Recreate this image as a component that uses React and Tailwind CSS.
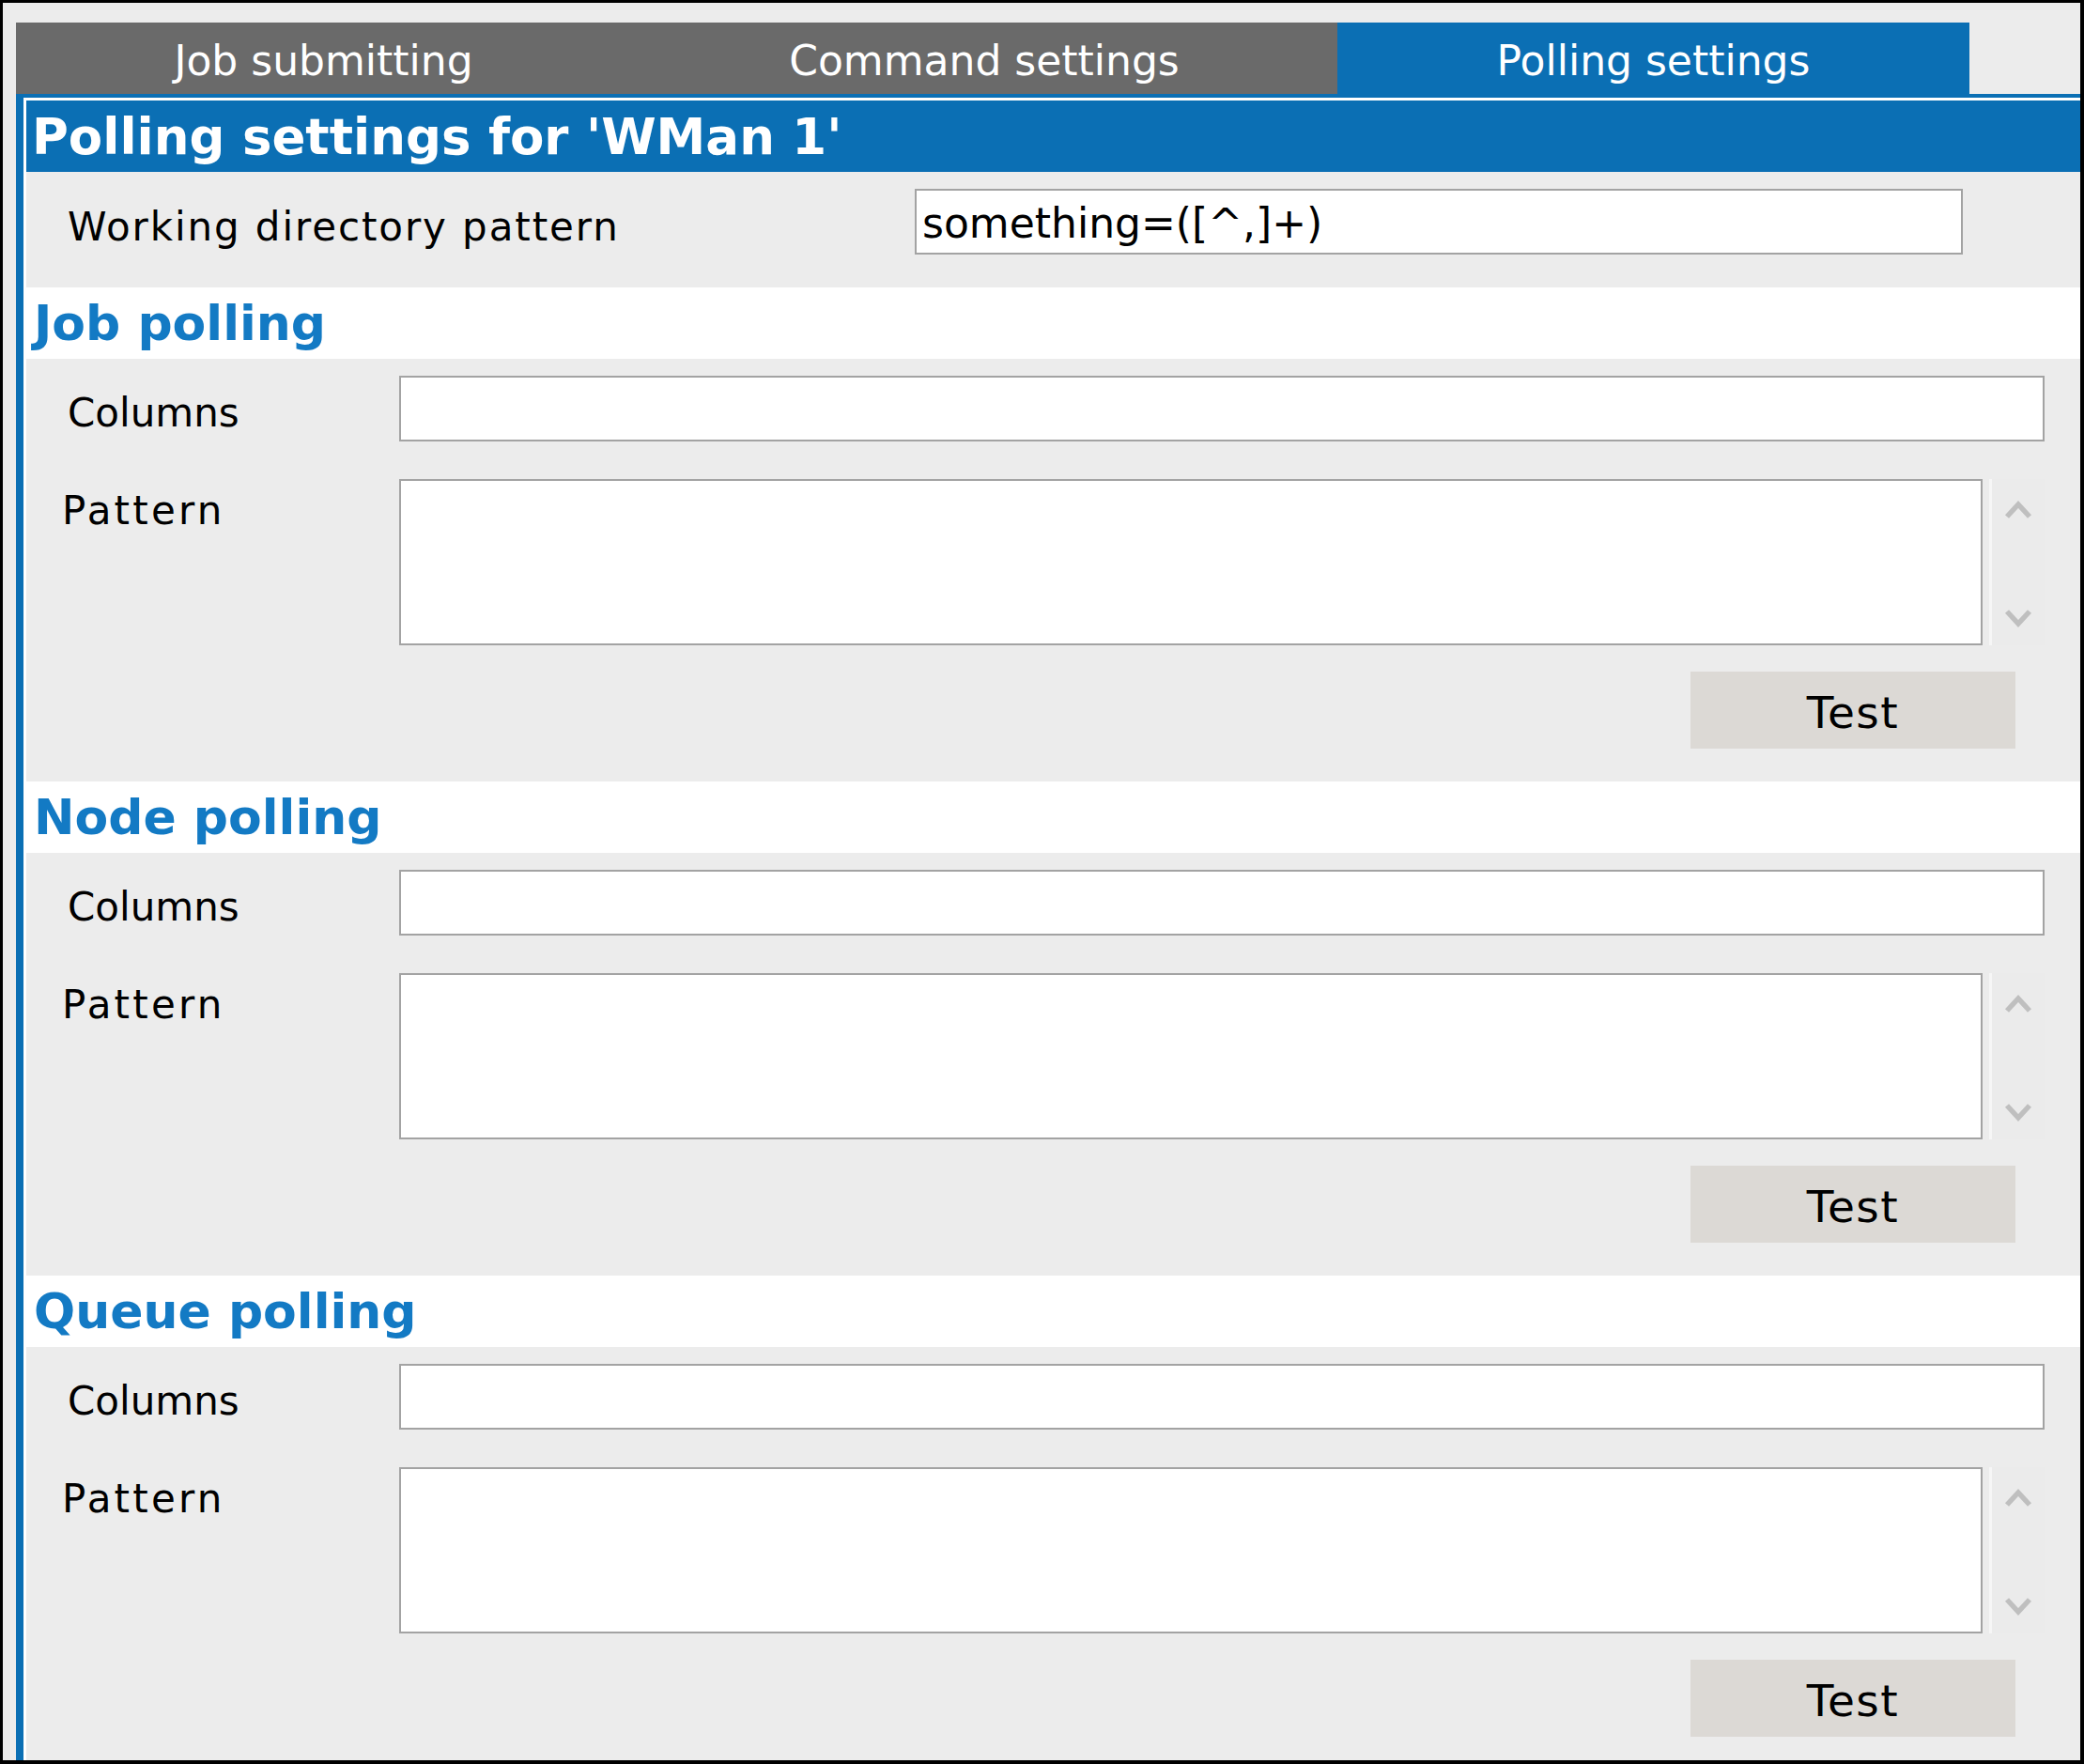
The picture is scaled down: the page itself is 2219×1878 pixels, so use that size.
import React from "react";

const TABS = [
  { label: "Job submitting", width: "w-[655px]", active: false },
  { label: "Command settings", width: "w-[752px]", active: false },
  { label: "Polling settings", width: "w-[673px]", active: true },
];

const SECTIONS = ["Job polling", "Node polling", "Queue polling"];

function ScrollArrows() {
  return (
    <div className="flex w-[59px] shrink-0 flex-col items-center justify-between border-l-[3px] border-[#f6f6f6] bg-[#ebebeb] pt-[20px] pb-[16px]">
      <svg width="30" height="24" viewBox="0 0 30 24" fill="none">
        <polyline points="3,20 15,7 27,20" stroke="#bfbfbf" strokeWidth="5.5" />
      </svg>
      <svg width="30" height="24" viewBox="0 0 30 24" fill="none">
        <polyline points="3,4 15,17 27,4" stroke="#bfbfbf" strokeWidth="5.5" />
      </svg>
    </div>
  );
}

function PollingSection({ title }) {
  return (
    <section>
      <div className="flex h-[76px] items-center bg-white pl-[8px]">
        <h2 className="text-[52px] font-bold text-[#137ac4]">{title}</h2>
      </div>
      <div className="flex h-[450px] flex-col bg-[#ececec] pt-[18px] pr-[38px]">
        {/* Columns */}
        <div className="flex h-[70px]">
          <label className="w-[397px] shrink-0 pt-[15px] pl-[44px] text-[42px] text-black">
            Columns
          </label>
          <input
            readOnly
            className="h-[70px] flex-1 border-2 border-[#a3a3a3] bg-white px-[6px] text-[44px] outline-none"
          />
        </div>

        {/* Pattern */}
        <div className="mt-[40px] flex h-[177px]">
          <label className="w-[397px] shrink-0 pt-[9px] pl-[38px] text-[42px] tracking-[3.2px] text-black">
            Pattern
          </label>
          <textarea
            readOnly
            className="h-full flex-1 resize-none border-2 border-[#a3a3a3] bg-white px-[6px] text-[44px] outline-none"
          />
          <div className="ml-[7px] flex">
            <ScrollArrows />
          </div>
        </div>

        <div className="mt-[28px] flex justify-end pr-[31px]">
          <button className="flex h-[82px] w-[346px] items-center justify-center bg-[#dcd9d5] pt-[4px] text-[47px] tracking-[1.5px] text-black">
            Test
          </button>
        </div>
      </div>
    </section>
  );
}

export default function App() {
  return (
    <div className="h-[1878px] w-[2219px] overflow-hidden border-t-[3px] border-r-4 border-b-4 border-l-[3px] border-black bg-[#ececec] font-['DejaVu_Sans',sans-serif] leading-[normal]">
      <div className="flex h-full flex-col pt-[21px] pl-[14px]">
        {/* tab strip */}
        <div className="flex h-[76px] shrink-0">
          {TABS.map((tab) => (
            <div
              key={tab.label}
              className={`flex items-center justify-center pt-[4px] text-[44px] text-white ${tab.width} ${
                tab.active ? "bg-[#0b6fb4]" : "bg-[#6a6a6a]"
              }`}
            >
              {tab.label}
            </div>
          ))}
        </div>

        {/* panel */}
        <div className="flex-1 border-t-4 border-l-[8px] border-[#0b6fb4]">
          <div className="h-full border-t-[3px] border-l-[3px] border-white">
            <div className="flex h-[76px] items-center bg-[#0b6fb4] pl-[6px]">
              <h1 className="text-[53px] font-bold text-white">
                Polling settings for 'WMan 1'
              </h1>
            </div>

            <div className="flex h-[123px] bg-[#ececec] pt-[18px]">
              <label className="w-[946px] shrink-0 pt-[16px] pl-[44px] text-[42px] tracking-[1.9px] text-black">
                Working directory pattern
              </label>
              <input
                readOnly
                value="something=([^,]+)"
                className="h-[70px] w-[1116px] border-2 border-[#a3a3a3] bg-white px-[6px] pt-[3px] text-[44px] text-black outline-none"
              />
            </div>

            {SECTIONS.map((s) => (
              <PollingSection key={s} title={s} />
            ))}
          </div>
        </div>
      </div>
    </div>
  );
}
